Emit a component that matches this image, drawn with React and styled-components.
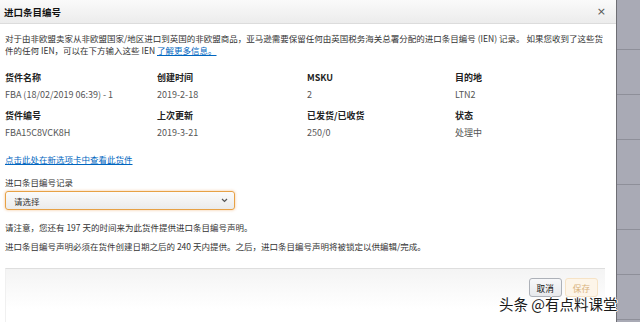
import styled, { createGlobalStyle } from 'styled-components';

const GlobalStyle = createGlobalStyle`
  html, body {
    margin: 0;
    padding: 0;
    width: 640px;
    height: 322px;
    overflow: hidden;
    background: #ffffff;
  }
  body {
    font-family: "Noto Sans CJK SC", "Noto Sans", sans-serif;
    color: #333333;
  }
`;

const FIELDS = [
  { label: '货件名称', value: 'FBA (18/02/2019 06:39) - 1' },
  { label: '创建时间', value: '2019-2-18' },
  { label: 'MSKU', value: '2' },
  { label: '目的地', value: 'LTN2' },
  { label: '货件编号', value: 'FBA15C8VCK8H' },
  { label: '上次更新', value: '2019-3-21' },
  { label: '已发货/已收货', value: '250/0' },
  { label: '状态', value: '处理中' },
];

function App() {
  return (
    <Page>
      <GlobalStyle />
      <Dialog>
        <Header>
          <Title>进口条目编号</Title>
          <Close>×</Close>
        </Header>
        <Body>
          <Intro>
            对于由非欧盟卖家从非欧盟国家/地区进口到英国的非欧盟商品，亚马逊需要保留任何由英国税务海关总署分配的进口条目编号 (IEN) 记录。 如果您收到了这些货
            <br />
            件的任何 IEN，可以在下方输入这些 IEN <TextLink href='#'>了解更多信息。</TextLink>
          </Intro>

          <Fields>
            {FIELDS.map((f) => (
              <Field key={f.label}>
                <Label>{f.label}</Label>
                <Value>{f.value}</Value>
              </Field>
            ))}
          </Fields>

          <ViewLink href='#'>点击此处在新选项卡中查看此货件</ViewLink>

          <FormLabel>进口条目编号记录</FormLabel>
          <Select>
            <span>请选择</span>
            <svg width='7' height='5' viewBox='0 0 7 5'>
              <path d='M1 1 L3.5 3.5 L6 1' fill='none' stroke='#555' strokeWidth='1.2' />
            </svg>
          </Select>

          <Notes>
            <Note>请注意，您还有 197 天的时间来为此货件提供进口条目编号声明。</Note>
            <Note>进口条目编号声明必须在货件创建日期之后的 240 天内提供。之后，进口条目编号声明将被锁定以供编辑/完成。</Note>
          </Notes>
        </Body>
        <Footer>
          <Button>取消</Button>
          <Button disabled>保存</Button>
        </Footer>
      </Dialog>
      <Side>
        {[50, 45, 45, 45, 45, 45, 45].map((h, i) => (
          <SideRow key={i} $h={h} />
        ))}
      </Side>
      <Watermark>头条 @有点料课堂</Watermark>
    </Page>
  );
}

const Page = styled.div`
  position: relative;
  display: flex;
  width: 640px;
  height: 322px;
  overflow: hidden;
`;
const Dialog = styled.div`
  width: 616px;
  flex-shrink: 0;
  background: #fff;
  display: flex;
  flex-direction: column;
`;
const Header = styled.div`
  height: 23px;
  display: flex;
  align-items: center;
  justify-content: space-between;
  padding: 0 10px 0 4px;
  background: linear-gradient(#fafafa, #ececec);
  border-bottom: 1px solid #dcdcdc;
`;
const Title = styled.h2`
  margin: 0;
  font-size: 9.5px;
  font-weight: bold;
  color: #111;
`;
const Close = styled.span`
  font-size: 11px;
  color: #555;
  font-family: "DejaVu Sans", sans-serif;
`;
const Body = styled.div`
  padding: 8px 0 0 5px;
  font-size: 8.5px;
  line-height: 12px;
`;
const Intro = styled.p`
  margin: 0;
  max-width: 600px;
`;
const TextLink = styled.a`
  color: #0066c0;
  text-decoration: underline;
`;
const Fields = styled.div`
  margin-top: 16px;
  display: grid;
  grid-template-columns: 152px 150px 148px 1fr;
  row-gap: 9px;
`;
const Field = styled.div`
  display: flex;
  flex-direction: column;
  gap: 5px;
`;
const Label = styled.div`
  font-weight: bold;
  color: #222;
  font-size: 9px;
`;
const Value = styled.div`
  color: #555;
  font-size: 9px;
`;
const ViewLink = styled.a`
  display: block;
  margin-top: 14px;
  color: #0066c0;
  text-decoration: underline;
`;
const FormLabel = styled.div`
  margin-top: 11px;
`;
const Select = styled.div`
  margin-top: 3px;
  width: 214px;
  height: 17px;
  padding: 0 6px 0 8px;
  display: flex;
  align-items: center;
  justify-content: space-between;
  border: 1px solid #e7a145;
  border-radius: 3px;
  background: linear-gradient(#fbfbfb, #ebebeb);
  box-shadow: 0 0 3px rgba(228, 121, 17, 0.45);
  color: #333;
`;
const Notes = styled.div`
  margin-top: 11px;
  display: flex;
  flex-direction: column;
  gap: 7px;
`;
const Note = styled.p`
  margin: 0;
`;
const Footer = styled.div`
  margin: 16px 11px 0 5px;
  flex: 1;
  display: flex;
  justify-content: flex-end;
  align-items: flex-start;
  gap: 3px;
  padding: 9px 7px 0 0;
  border-top: 1px solid #dedede;
  border-left: 1px solid #f0f0f0;
  background: linear-gradient(#f4f4f4, #ffffff 40px);
`;
const Button = styled.button`
  height: 19px;
  padding: 0 7px;
  font-family: inherit;
  font-size: 8.6px;
  border-radius: 3px;
  border: 1px solid #adb1b8;
  color: #111;
  background: linear-gradient(#f7f8fa, #e7e9ec);
  &:disabled {
    border-color: #f6e3c6;
    color: #d9b27c;
    background: #fdf5e9;
  }
`;
const Side = styled.div`
  flex: 1;
  background: #a9aab5;
  border-left: 1px solid #6e6e74;
  display: flex;
  flex-direction: column;
`;
const SideRow = styled.div`
  height: ${(p) => p.$h}px;
  flex-shrink: 0;
  box-sizing: border-box;
  border-bottom: 1px solid #8e8f99;
`;
const Watermark = styled.div`
  position: absolute;
  left: 499px;
  top: 295px;
  font-size: 14.5px;
  line-height: 18px;
  color: #1a1a1a;
  white-space: nowrap;
  text-shadow: 1px 0 0 #fff, -1px 0 0 #fff, 0 1px 0 #fff, 0 -1px 0 #fff;
`;

export default App;
